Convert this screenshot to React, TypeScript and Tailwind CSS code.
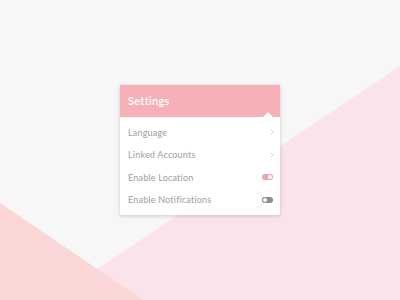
import { ChevronRight } from 'lucide-react';

const rows = [
  { label: 'Language', kind: 'link' },
  { label: 'Linked Accounts', kind: 'link' },
  { label: 'Enable Location', kind: 'on' },
  { label: 'Enable Notifications', kind: 'off' },
];

function Toggle({ on }: { on: boolean }) {
  return on ? (
    <div className="mr-[1px] flex h-[6px] w-[11px] items-center justify-end rounded-full bg-[#f3a3ad]">
      <div className="h-[6px] w-[6px] rounded-full border border-[#f3a3ad] bg-white" />
    </div>
  ) : (
    <div className="mr-[1px] flex h-[6px] w-[11px] items-center justify-start rounded-full bg-[#8a8a8a]">
      <div className="h-[6px] w-[6px] rounded-full border border-[#8a8a8a] bg-white" />
    </div>
  );
}

export default function App() {
  return (
    <div className="relative flex h-[300px] w-[400px] items-center justify-center overflow-hidden bg-[#f7f7f7] font-['Lato',sans-serif]">
      <svg className="absolute inset-0" width="400" height="300" viewBox="0 0 400 300">
        <polygon points="400,66 400,300 51,300" fill="#fbe3ea" />
        <polygon points="0,203 143,300 0,300" fill="#fad6d6" />
      </svg>

      <div className="relative w-[160px] bg-white shadow-[0_1px_4px_rgba(0,0,0,0.18)]">
        <div className="relative flex h-[32px] items-center bg-[#f5b0b8] px-2">
          <span className="text-[11px] font-semibold tracking-[0.3px] text-white">Settings</span>
          <div className="absolute bottom-0 right-[7px] h-0 w-0 border-x-[5px] border-b-[5px] border-x-transparent border-b-white" />
        </div>
        <div className="py-1">
          {rows.map((r) => (
            <div key={r.label} className="flex h-[22.5px] items-center justify-between pl-2 pr-[6px]">
              <span className="text-[9px] tracking-[0.2px] text-[#9d9d9d]">{r.label}</span>
              {r.kind === 'link' ? (
                <ChevronRight size={8} strokeWidth={1.5} className="-mr-[2px] text-[#a8a8a8]" />
              ) : (
                <Toggle on={r.kind === 'on'} />
              )}
            </div>
          ))}
        </div>
      </div>
    </div>
  );
}
